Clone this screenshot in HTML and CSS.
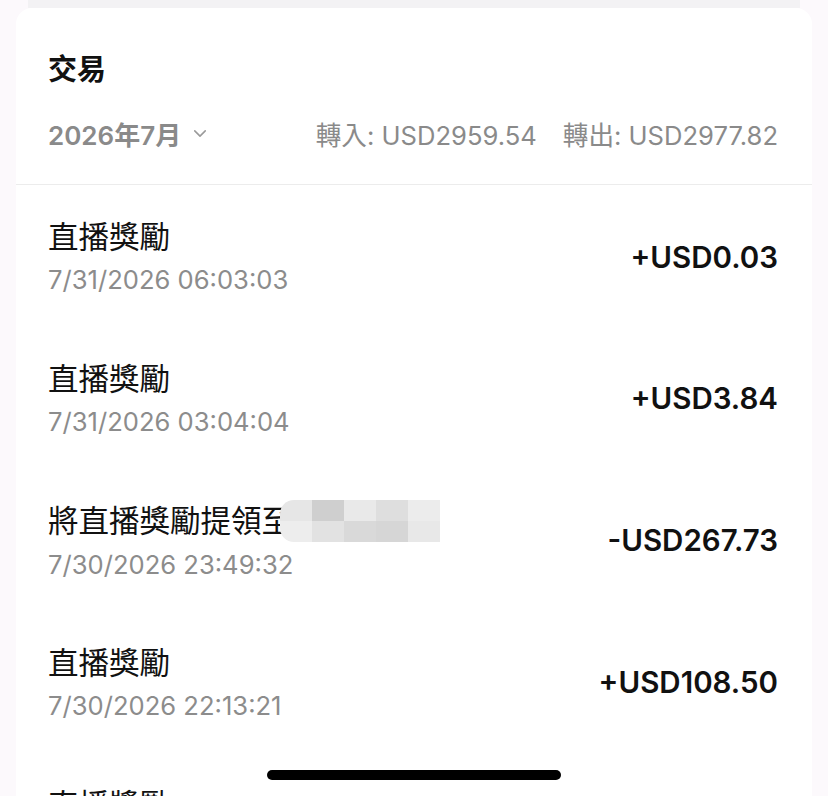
FILE: index.html
```html
<!DOCTYPE html>
<html lang="zh-Hant">
<head>
<meta charset="UTF-8">
<meta name="viewport" content="width=device-width, initial-scale=1.0">
<title>交易</title>
<link rel="stylesheet" href="styles.css">
</head>
<body>
  <div class="top-strip"></div>
  <div class="tx-card">
    <div class="tx-header">
      <h2>交易</h2>
      <div class="summary">
        <div class="month">2026年7月
          <svg class="chevron" viewBox="0 0 16 10" width="14" height="9">
            <path d="M2 2 L8 8 L14 2" fill="none" stroke="#9a9a9a" stroke-width="1.8" stroke-linecap="round" stroke-linejoin="round"/>
          </svg>
        </div>
        <div class="totals">
          <span>轉入: USD2959.54</span>
          <span>轉出: USD2977.82</span>
        </div>
      </div>
    </div>

    <ul class="tx-list">
      <li class="tx-row">
        <div class="tx-info">
          <div class="tx-title">直播獎勵</div>
          <div class="tx-date">7/31/2026 06:03:03</div>
        </div>
        <div class="tx-amount">+USD0.03</div>
      </li>
      <li class="tx-row">
        <div class="tx-info">
          <div class="tx-title">直播獎勵</div>
          <div class="tx-date">7/31/2026 03:04:04</div>
        </div>
        <div class="tx-amount">+USD3.84</div>
      </li>
      <li class="tx-row">
        <div class="tx-info">
          <div class="tx-title">將直播獎勵提領至<span class="redacted"><i></i><i></i><i></i><i></i><i></i><i></i><i></i><i></i><i></i><i></i></span></div>
          <div class="tx-date">7/30/2026 23:49:32</div>
        </div>
        <div class="tx-amount">-USD267.73</div>
      </li>
      <li class="tx-row">
        <div class="tx-info">
          <div class="tx-title">直播獎勵</div>
          <div class="tx-date">7/30/2026 22:13:21</div>
        </div>
        <div class="tx-amount">+USD108.50</div>
      </li>
      <li class="tx-row">
        <div class="tx-info">
          <div class="tx-title">直播獎勵</div>
          <div class="tx-date">7/30/2026 20:41:10</div>
        </div>
        <div class="tx-amount">+USD12.36</div>
      </li>
    </ul>
  </div>

  <div class="home-bar"></div>
</body>
</html>
```

FILE: styles.css
```css
body {
  font-family: Inter, "Noto Sans CJK TC", sans-serif;
  background-color: #fcf9fc;
  margin: 0;
  padding: 0;
  height: 796px;
  overflow: hidden;
}

.top-strip {
  height: 8px;
  margin: 0 28px;
  background-color: #f3f2f4;
}

.tx-card {
  margin: 0 16px;
}

.tx-header {
  background-color: #fff;
  border-radius: 16px 16px 0 0;
  padding: 48px 34px 0 32px;
  height: 128px;
  border-bottom: 1px solid #ececec;
}

h2 {
  margin: 0;
  font-size: 29px;
  font-weight: 700;
  line-height: 28px;
  color: #111;
}

.summary {
  display: flex;
  justify-content: space-between;
  align-items: center;
  margin-top: 31px;
  color: #8a8a8a;
  font-size: 25.6px;
}

.month {
  font-size: 26px;
  font-weight: 600;
  display: flex;
  align-items: center;
  gap: 12px;
}

.totals {
  display: flex;
  gap: 26px;
}

.tx-list {
  list-style: none;
  margin: 0;
  padding: 0;
  background-color: #fff;
}

.tx-row {
  display: flex;
  justify-content: space-between;
  align-items: center;
  height: 142px;
  padding: 0 34px 0 32px;
  box-sizing: border-box;
}

.tx-row:first-child {
  height: 141px;
}

.tx-info {
  margin-top: 6px;
}

.tx-title {
  font-size: 30.5px;
  color: #111;
  line-height: 40px;
  display: flex;
  align-items: center;
}

.tx-date {
  font-size: 25.6px;
  color: #8c8c8c;
  line-height: 40px;
  margin-top: 3px;
}

.tx-amount {
  font-size: 29.5px;
  font-weight: 600;
  color: #111;
  margin-top: 2px;
}

.redacted {
  display: inline-grid;
  grid-template-columns: repeat(5, 32px);
  grid-template-rows: 21px 21px;
  margin-left: -12px;
  border-radius: 14px 0 0 14px;
  overflow: hidden;
}

.redacted i:nth-child(1) { background: #e6e6e6; }
.redacted i:nth-child(2) { background: #cfcfcf; }
.redacted i:nth-child(3) { background: #e9e9e9; }
.redacted i:nth-child(4) { background: #dedede; }
.redacted i:nth-child(5) { background: #ececec; }
.redacted i:nth-child(6) { background: #ededed; }
.redacted i:nth-child(7) { background: #e2e2e2; }
.redacted i:nth-child(8) { background: #d9d9d9; }
.redacted i:nth-child(9) { background: #d6d6d6; }
.redacted i:nth-child(10) { background: #e8e8e8; }

.home-bar {
  position: absolute;
  left: 267px;
  top: 770px;
  width: 294px;
  height: 10px;
  border-radius: 5px;
  background-color: #000;
}
```
